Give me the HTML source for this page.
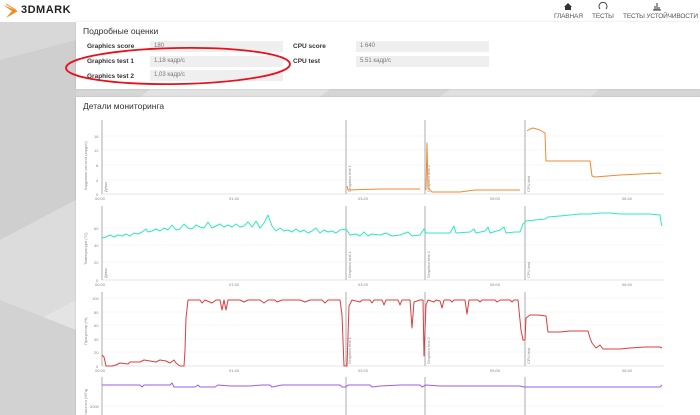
<!DOCTYPE html>
<html><head><meta charset="utf-8"><style>
*{margin:0;padding:0;box-sizing:border-box}
body{width:700px;height:415px;overflow:hidden;background:#e4e4e4;font-family:"Liberation Sans","DejaVu Sans",sans-serif;position:relative}
.hdr{position:absolute;left:0;top:0;width:700px;height:22px;background:#fff}
.card{position:absolute;background:#fff;box-shadow:0 0 2px rgba(0,0,0,.15)}
.t{position:absolute;font-size:6.5px;color:#333;font-weight:bold}
.b{position:absolute;height:11px;background:#efefef;font-size:6px;color:#777;padding:2px 4px;line-height:7px}
.nav{position:absolute;top:13px;font-size:6.5px;color:#555;white-space:nowrap;letter-spacing:-0.15px}
</style></head><body>
<svg style="position:absolute;left:0;top:0" width="700" height="415">
<polygon points="0,22 76,22 76,120 0,170" fill="#d8d8d8"/>
<polygon points="0,60 76,40 76,200 0,240" fill="#cfcfcf"/>
<polygon points="0,240 76,200 76,300 0,340" fill="#dcdcdc"/>
<polygon points="0,300 76,330 76,415 0,415" fill="#d2d2d2"/>
<polygon points="76,89 700,89 700,97 76,97" fill="#d6d6d6"/>
<polygon points="150,89 330,89 320,97 140,97" fill="#e2e2e2"/>
<polygon points="450,89 600,89 590,97 440,97" fill="#e0e0e0"/>
</svg>
<div class="hdr"></div>
<svg style="position:absolute;left:2px;top:3px" width="22" height="16"><path d="M1 2 L16 8 L4 15 L10 8 Z" fill="#f08a1c"/><path d="M4 1 L14 7" stroke="#f5a24a" stroke-width="1.2"/></svg>
<div style="position:absolute;left:21px;top:4px;font-size:11px;font-weight:bold;letter-spacing:.5px;color:#222">3DMARK</div>
<svg style="position:absolute;left:563px;top:2px" width="10" height="9"><path d="M1 5 L5 1 L9 5 L8 5 L8 8 L2 8 L2 5Z" fill="#333"/></svg>
<svg style="position:absolute;left:598px;top:2px" width="10" height="9"><path d="M2 7 A4 4 0 1 1 8 7" fill="none" stroke="#333" stroke-width="0.9"/></svg>
<svg style="position:absolute;left:652px;top:2px" width="10" height="9"><path d="M1 8H9M3 8V4M5 8V1M7 8V5" stroke="#333" stroke-width="1"/></svg>
<div class="nav" style="left:554px">ГЛАВНАЯ</div>
<div class="nav" style="left:592px">ТЕСТЫ</div>
<div class="nav" style="left:623px">ТЕСТЫ УСТОЙЧИВОСТИ</div>

<div class="card" style="left:76px;top:22px;width:624px;height:67px"></div>
<div style="position:absolute;left:83px;top:26px;font-size:8.5px;color:#333">Подробные оценки</div>
<div class="t" style="left:87px;top:43px">Graphics score</div>
<div class="t" style="left:87px;top:58px">Graphics test 1</div>
<div class="t" style="left:87px;top:73px">Graphics test 2</div>
<div class="b" style="left:150px;top:41px;width:133px">180</div>
<div class="b" style="left:150px;top:56px;width:133px">1,18 кадр/с</div>
<div class="b" style="left:150px;top:70px;width:133px">1,03 кадр/с</div>
<div class="t" style="left:293px;top:43px">CPU score</div>
<div class="t" style="left:293px;top:58px">CPU test</div>
<div class="b" style="left:356px;top:41px;width:133px">1 640</div>
<div class="b" style="left:356px;top:56px;width:133px">5.51 кадр/с</div>

<div class="card" style="left:76px;top:97px;width:624px;height:318px"></div>
<div style="position:absolute;left:83px;top:101px;font-size:8.5px;color:#333">Детали мониторинга</div>

<svg style="position:absolute;left:0;top:0" width="700" height="415" font-family="Liberation Sans,sans-serif">
<g stroke="#f0f0f0" stroke-width="0.6">
<path d="M102 136H664M102 150H664M102 165H664M102 180H664M102 228H664M102 245H664M102 262H664M102 298H664M102 312H664M102 325H664M102 339H664M102 352H664M102 406H664"/>
</g>
<g stroke="#ccc" stroke-width="0.6">
<path d="M102 194H664M102 280H664M102 366H664"/>
</g>
<g stroke="#999" stroke-width="0.8">
<path d="M102 120V194M102 206V280M102 292V366M102 377V415"/>
<path d="M346 120V194M346 206V280M346 292V366M346 377V415"/>
<path d="M425 120V194M425 206V280M425 292V366M425 377V415"/>
<path d="M525 120V194M525 206V280M525 292V366M525 377V415"/>
</g>
<g font-size="4px" fill="#888">
<text x="95" y="200">00:00</text><text x="229" y="200">01:40</text><text x="358" y="200">03:20</text><text x="490" y="200">05:00</text><text x="622" y="200">06:40</text>
<text x="95" y="286">00:00</text><text x="229" y="286">01:40</text><text x="358" y="286">03:20</text><text x="490" y="286">05:00</text><text x="622" y="286">06:40</text>
<text x="95" y="372">00:00</text><text x="229" y="372">01:40</text><text x="358" y="372">03:20</text><text x="490" y="372">05:00</text><text x="622" y="372">06:40</text>
<text x="96" y="196">0</text><text x="96" y="182">4</text><text x="96" y="167">8</text><text x="94" y="152">12</text><text x="94" y="138">16</text>
<text x="96" y="282">0</text><text x="94" y="264">20</text><text x="94" y="247">40</text><text x="94" y="230">60</text>
<text x="96" y="368">0</text><text x="94" y="354">20</text><text x="94" y="341">40</text><text x="94" y="327">60</text><text x="94" y="314">80</text><text x="92" y="300">100</text>
<text x="90" y="408">2000</text>
<text transform="translate(87 190) rotate(-90)">Кадровая частота (кадр/с)</text>
<text transform="translate(87 265) rotate(-90)">Температура (°C)</text>
<text transform="translate(87 345) rotate(-90)">Процессор (%)</text>
<text transform="translate(87 415) rotate(-90)">Частота (МГц)</text>
<text transform="translate(107 192) rotate(-90)">Демо</text>
<text transform="translate(351 192) rotate(-90)">Graphics test 1</text>
<text transform="translate(430 192) rotate(-90)">Graphics test 2</text>
<text transform="translate(530 192) rotate(-90)">CPU test</text>
<text transform="translate(107 278) rotate(-90)">Демо</text>
<text transform="translate(351 278) rotate(-90)">Graphics test 1</text>
<text transform="translate(430 278) rotate(-90)">Graphics test 2</text>
<text transform="translate(530 278) rotate(-90)">CPU test</text>
<text transform="translate(351 364) rotate(-90)">Graphics test 1</text>
<text transform="translate(430 364) rotate(-90)">Graphics test 2</text>
<text transform="translate(530 364) rotate(-90)">CPU test</text>
</g>
<g fill="none" stroke-width="1" stroke-linejoin="round">
<path stroke="#f08a30" d="M347 186L348 190L380 189L420 189M426 190L427 143L428 188L432 192L460 192L475 190L500 190L520 190M527 131L530 129L533 128L540 130L545 133L546 161L590 161L592 176L595 177L620 175L640 174L660 173L661 174"/>
<path stroke="#2ee8c0" d="M102 238L106 237L110 235L114 237L118 235L122 236L126 234L130 236L134 233L138 234L142 232L146 229L148 232L152 231L156 229L160 231L164 228L168 230L172 225L176 230L180 229L184 224L188 228L192 229L196 225L200 227L204 228L208 222L212 228L216 226L220 224L224 227L228 225L232 227L236 224L240 227L244 226L248 222L252 227L256 221L260 228L264 223L268 215L272 226L276 231L280 228L284 231L288 230L292 232L296 229L300 232L304 230L308 233L312 231L316 228L320 233L324 230L328 232L332 231L336 233L340 230L346 229L350 235L356 234L360 236L364 232L368 236L372 234L380 235L386 233L392 236L400 235L408 232L412 236L420 235L424 229L426 233L440 233L450 233L454 226L456 233L470 232L474 229L476 233L485 231L488 227L490 233L500 230L504 227L506 233L515 232L520 232L523 224L526 221L535 220L545 219L548 217L560 216L570 215L580 214L590 214L600 213L610 213L620 214L630 214L640 214L650 214L660 215L661 222L662 226"/>
<path stroke="#dd3c3c" d="M102 355L104 357L106 366L112 366L116 365L120 363L128 364L130 362L140 362L144 360L150 361L156 362L160 360L166 361L170 363L174 360L176 363L180 366L184 366L185 350L186 318L188 300L200 300L202 303L205 300L212 303L216 300L220 300L222 310L224 300L226 310L228 300L240 300L244 302L248 300L260 300L264 303L268 300L275 300L277 302L282 300L300 300L305 302L310 300L322 300L325 303L328 300L340 300L342 315L344 366L347 366L349 306L352 300L360 302L362 300L370 300L372 303L374 300L382 300L384 305L386 300L398 300L400 305L402 300L410 300L412 328L414 302L420 300L423 300L424 356L426 305L428 300L434 302L436 300L440 301L442 308L444 300L450 300L452 302L454 300L465 300L467 314L469 300L478 300L480 302L482 300L495 300L497 302L500 300L508 300L510 300L512 302L514 300L518 300L521 330L523 340L525 340L526 318L530 315L538 315L546 316L548 332L560 332L570 331L580 331L588 331L590 338L592 343L596 348L600 345L603 349L620 349L630 348L645 347L660 347L662 348"/>
<path stroke="#9b5de5" d="M102 385L140 385L142 387L144 385L170 385L172 383L174 387L195 387L198 385L200 387L215 387L218 385L230 386L250 386L262 385L270 385L272 387L282 385L300 385L340 385L342 387L346 387L348 385L370 385L372 387L380 386L400 385L420 385L422 387L426 385L440 386L480 386L500 386L520 386L524 387L560 387L600 387L640 387L660 387L662 385"/>
</g>
<ellipse cx="178" cy="66" rx="112" ry="18" fill="none" stroke="#e8101a" stroke-width="1.8" transform="rotate(-1 178 66)"/>
</svg>
</body></html>
